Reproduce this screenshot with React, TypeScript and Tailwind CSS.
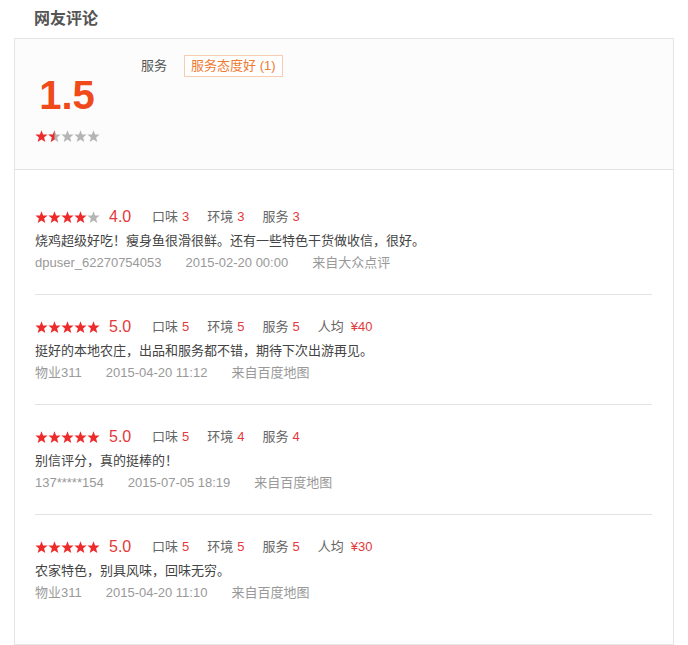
import React from "react";

const FONT = '"Liberation Sans", "Noto Sans CJK SC", sans-serif';

function Star({ fill, half }: { fill: boolean; half?: boolean }) {
  const d = "M6.5 0.3 L8.1 4.4 L12.6 4.6 L9.1 7.4 L10.3 11.9 L6.5 9.4 L2.7 11.9 L3.9 7.4 L0.4 4.6 L4.9 4.4 Z";
  return (
    <svg width="13" height="12" viewBox="0 0 13 12" className="block">
      <defs>
        <clipPath id="halfclip">
          <rect x="0" y="0" width="6.5" height="12" />
        </clipPath>
      </defs>
      <path d={d} fill={fill ? "#ee2b2b" : "#b5b5b5"} />
      {half && <path d={d} fill="#ee2b2b" clipPath="url(#halfclip)" />}
    </svg>
  );
}

function Stars({ value }: { value: number }) {
  return (
    <div className="flex">
      {[0, 1, 2, 3, 4].map((i) => (
        <Star key={i} fill={i + 1 <= value} half={i < value && i + 1 > value} />
      ))}
    </div>
  );
}

type Review = {
  score: number;
  taste: number;
  env: number;
  service: number;
  avg?: string;
  text: string;
  user: string;
  date: string;
  source: string;
};

const reviews: Review[] = [
  {
    score: 4,
    taste: 3,
    env: 3,
    service: 3,
    text: "烧鸡超级好吃！瘦身鱼很滑很鲜。还有一些特色干货做收信，很好。",
    user: "dpuser_62270754053",
    date: "2015-02-20 00:00",
    source: "来自大众点评",
  },
  {
    score: 5,
    taste: 5,
    env: 5,
    service: 5,
    avg: "¥40",
    text: "挺好的本地农庄，出品和服务都不错，期待下次出游再见。",
    user: "物业311",
    date: "2015-04-20 11:12",
    source: "来自百度地图",
  },
  {
    score: 5,
    taste: 5,
    env: 4,
    service: 4,
    text: "别信评分，真的挺棒的！",
    user: "137*****154",
    date: "2015-07-05 18:19",
    source: "来自百度地图",
  },
  {
    score: 5,
    taste: 5,
    env: 5,
    service: 5,
    avg: "¥30",
    text: "农家特色，别具风味，回味无穷。",
    user: "物业311",
    date: "2015-04-20 11:10",
    source: "来自百度地图",
  },
];

function Item({ r, last }: { r: Review; last: boolean }) {
  return (
    <div className={`pt-[21px] ${last ? "pb-[40px]" : "pb-[20px] border-b border-[#e3e3e3]"}`}>
      <div className="flex items-center h-[22px]">
        <Stars value={r.score} />
        <span className="ml-[9px] text-[16px] text-[#e4393c] w-[24px] leading-none">{r.score.toFixed(1)}</span>
        <span className="ml-[19px] text-[13px] text-[#666]">口味</span>
        <span className="ml-[4px] text-[13px] text-[#e4393c]">{r.taste}</span>
        <span className="ml-[18px] text-[13px] text-[#666]">环境</span>
        <span className="ml-[4px] text-[13px] text-[#e4393c]">{r.env}</span>
        <span className="ml-[18px] text-[13px] text-[#666]">服务</span>
        <span className="ml-[4px] text-[13px] text-[#e4393c]">{r.service}</span>
        {r.avg && (
          <>
            <span className="ml-[18px] text-[13px] text-[#666]">人均</span>
            <span className="ml-[7px] text-[13px] text-[#e4393c]">{r.avg}</span>
          </>
        )}
      </div>
      <div className="mt-[2px] h-[22px] flex items-center text-[13px] text-[#444]">{r.text}</div>
      <div className="h-[22px] flex items-center text-[13px] text-[#999] gap-[24px]">
        <span>{r.user}</span>
        <span>{r.date}</span>
        <span>{r.source}</span>
      </div>
    </div>
  );
}

export default function App() {
  return (
    <div className="w-[688px] h-[645px] bg-white" style={{ fontFamily: FONT }}>
      <div className="pl-[34px] h-[38px] pt-[7px]">
        <span className="text-[16px] font-bold text-[#555] leading-[22px]">网友评论</span>
      </div>
      <div className="ml-[14px] w-[660px] border border-[#e5e5e5]">
        <div className="h-[131px] bg-[#fcfcfc] border-b border-[#e3e3e3] flex pl-[20px]">
          <div className="w-[64px] flex flex-col items-center">
            <div className="mt-[34px] text-[40px] font-bold text-[#f04a1a] leading-[44px]">1.5</div>
            <div className="mt-[13px]">
              <Stars value={1.5} />
            </div>
          </div>
          <div className="ml-[42px] mt-[16px] flex items-center h-[22px]">
            <span className="text-[13px] text-[#555]">服务</span>
            <span className="ml-[17px] h-[22px] px-[6px] flex items-center border border-[#f6cdb0] bg-white text-[13px] text-[#f07b33]">
              服务态度好 (1)
            </span>
          </div>
        </div>
        <div className="pl-[20px] pr-[21px] pt-[15px]">
          {reviews.map((r, i) => (
            <Item key={i} r={r} last={i === reviews.length - 1} />
          ))}
        </div>
      </div>
    </div>
  );
}
